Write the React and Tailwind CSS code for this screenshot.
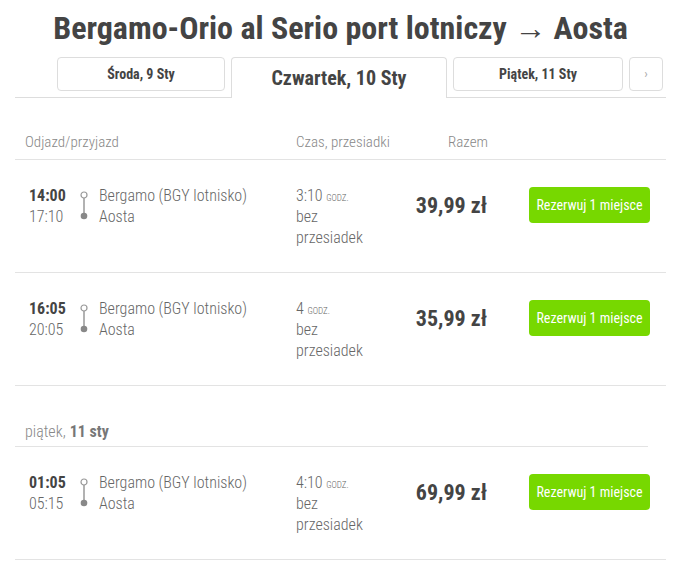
function RouteIcon() {
  return (
    <svg width="10" height="30" viewBox="0 0 10 30" className="block">
      <circle cx="5" cy="4" r="3" fill="white" stroke="#999" strokeWidth="1.2" />
      <line x1="5" y1="7" x2="5" y2="25" stroke="#999" strokeWidth="1.5" />
      <circle cx="5" cy="25" r="3.3" fill="#888" />
    </svg>
  );
}

function Row({ dep, arr, dur, price }) {
  return (
    <div className="flex items-start h-[113px] pt-[25px] pl-[14px] border-b border-[#e3e3e3]">
      <div className="w-[48px] text-[16px] leading-[21px]">
        <div className="font-bold text-[#444]">{dep}</div>
        <div className="font-light text-[#666]">{arr}</div>
      </div>
      <div className="w-[14px] flex justify-center pt-[6px]">
        <RouteIcon />
      </div>
      <div className="w-[205px] pl-[8px] text-[16px] leading-[21px] font-light text-[#666]">
        <div>Bergamo (BGY lotnisko)</div>
        <div>Aosta</div>
      </div>
      <div className="w-[80px] text-[16px] leading-[21px] font-light text-[#666]">
        <div className="h-[21px]">
          {dur} <span className="text-[9px] leading-[0] uppercase">godz.</span>
        </div>
        <div>bez przesiadek</div>
      </div>
      <div className="w-[111px] text-right text-[22px] leading-[30px] font-bold text-[#444] pt-[6px]">
        {price}
      </div>
      <div className="ml-[42px] pt-[2px]">
        <button className="w-[121px] h-[36px] rounded-[4px] bg-[#77d800] text-white text-[14px] font-normal">
          Rezerwuj 1 miejsce
        </button>
      </div>
    </div>
  );
}

export default function App() {
  return (
    <div className="w-[681px] min-h-[582px] bg-white font-['Roboto_Condensed',Roboto,sans-serif]">
      <h1 className="pt-[8px] text-center text-[32px] leading-[40px] font-bold text-[#444]">
        Bergamo-Orio al Serio port lotniczy → Aosta
      </h1>
      <div className="mx-[15px] mt-[9px] flex items-start pl-[42px] gap-[6px] border-b border-[#ddd] h-[41px]">
        <div className="w-[168px] h-[34px] flex items-center justify-center border border-[#ddd] rounded-[4px] text-[14px] font-bold text-[#444]">
          Środa, 9 Sty
        </div>
        <div className="w-[216px] h-[41px] flex items-center justify-center border border-b-0 border-[#ddd] rounded-t-[4px] bg-white text-[20px] font-bold text-[#444]">
          Czwartek, 10 Sty
        </div>
        <div className="w-[170px] h-[34px] flex items-center justify-center border border-[#ddd] rounded-[4px] text-[14px] font-bold text-[#444]">
          Piątek, 11 Sty
        </div>
        <div className="w-[34px] h-[34px] flex items-center justify-center border border-[#ddd] rounded-[4px] text-[13px] text-[#aaa]">
          ›
        </div>
      </div>
      <div className="mx-[15px]">
        <div className="h-[62px] flex items-end pb-[7px] border-b border-[#e3e3e3] text-[15px] leading-[20px] font-light text-[#888] whitespace-nowrap">
          <div className="pl-[10px] w-[281px]">Odjazd/przyjazd</div>
          <div className="w-[80px]">Czas, przesiadki</div>
          <div className="w-[112px] text-right">Razem</div>
        </div>
        <Row dep="14:00" arr="17:10" dur="3:10" price="39,99 zł" />
        <Row dep="16:05" arr="20:05" dur="4" price="35,99 zł" />
        <div className="mr-[18px] h-[61px] flex items-end pb-[4px] pl-[10px] border-b border-[#e3e3e3] text-[16px] leading-[20px] text-[#888]">
          <span className="font-light">piątek,</span>
          <span className="font-bold text-[#777] ml-[4px]">11 sty</span>
        </div>
        <Row dep="01:05" arr="05:15" dur="4:10" price="69,99 zł" />
      </div>
    </div>
  );
}
